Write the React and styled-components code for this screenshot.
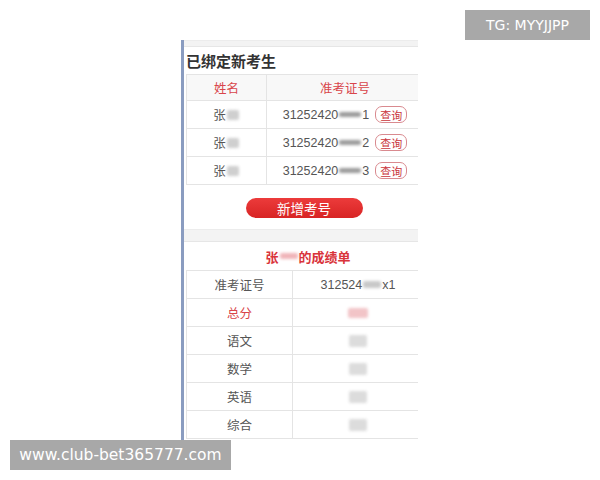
import React from 'react';
import styled, { createGlobalStyle } from 'styled-components';

const GlobalStyle = createGlobalStyle`
  html, body {
    margin: 0;
    padding: 0;
    background: #fff;
    font-family: "Liberation Sans", "Noto Sans CJK SC", sans-serif;
  }
`;

const Page = styled.div`
  position: relative;
  width: 600px;
  height: 480px;
  overflow: hidden;
  padding: 40px 0 0 181px;
  box-sizing: border-box;
`;

const Phone = styled.div`
  width: 237px;
  height: 400px;
  overflow: hidden;
  border-left: 3px solid #8a9cc0;
  box-sizing: border-box;
  background: #fff;
`;

const Inner = styled.div`
  width: 240px;
`;

const Band = styled.div`
  height: ${p => p.h}px;
  background: #f3f3f3;
  border-top: 1px solid #ececec;
  border-bottom: 1px solid #e6e6e6;
  box-sizing: border-box;
`;

const SectionTitle = styled.div`
  height: 27px;
  display: flex;
  align-items: center;
  padding-left: 2px;
  font-size: 15px;
  font-weight: bold;
  color: #333;
`;

const Table = styled.div`
  margin-left: 2px;
  border-left: 1px solid #e4e4e4;
  border-top: 1px solid #e4e4e4;
`;

const Row = styled.div`
  display: grid;
  grid-template-columns: ${p => p.cols};
  height: ${p => p.h || 28}px;
  border-bottom: 1px solid #e4e4e4;
  box-sizing: border-box;
  background: ${p => (p.head ? '#f8f8f8' : '#fff')};
`;

const Cell = styled.div`
  display: flex;
  align-items: center;
  justify-content: center;
  border-right: 1px solid #e4e4e4;
  font-size: 12.5px;
  color: ${p => (p.red ? '#d9454a' : '#555')};
  white-space: nowrap;
`;

const Blur = styled.span`
  display: inline-block;
  width: ${p => p.w}px;
  height: ${p => p.hh || 10}px;
  background: ${p => p.c || '#cfcfcf'};
  filter: blur(1.5px);
  border-radius: 2px;
  margin: 0 1px;
`;

const QueryBtn = styled.span`
  display: inline-flex;
  align-items: center;
  height: 15px;
  padding: 0 4px;
  margin-left: 6px;
  border: 1px solid #d98a8f;
  border-radius: 7px;
  font-size: 11px;
  color: #c9343b;
`;

const ButtonRow = styled.div`
  height: 44px;
  display: flex;
  justify-content: center;
  padding-top: 13px;
  box-sizing: border-box;
`;

const AddButton = styled.button`
  width: 117px;
  height: 20px;
  border: none;
  border-radius: 10px;
  background: linear-gradient(#ec3b3b, #d82424);
  color: #fff;
  font-family: inherit;
  font-size: 13.5px;
  padding: 0;
`;

const ScoreTitle = styled.div`
  height: 28px;
  display: flex;
  align-items: center;
  justify-content: center;
  padding-left: 8px;
  font-size: 13px;
  font-weight: bold;
  color: #d9343b;
`;

const Tag = styled.div`
  position: absolute;
  background: #a8a8a8;
  color: #fff;
  font-family: "DejaVu Sans", "Liberation Sans", sans-serif;
  display: flex;
  align-items: center;
  justify-content: center;
  height: 30px;
`;

const TopTag = styled(Tag)`
  top: 10px;
  left: 465px;
  width: 125px;
  font-size: 14px;
`;

const BottomTag = styled(Tag)`
  top: 440px;
  left: 10px;
  width: 221px;
  font-size: 15.5px;
`;

const students = ['1', '2', '3'];
const subjects = ['语文', '数学', '英语', '综合'];

export default function App() {
  return (
    <>
      <GlobalStyle />
      <Page>
        <Phone>
          <Inner>
            <Band h={7} />
            <SectionTitle>已绑定新考生</SectionTitle>
            <Table>
              <Row cols="80px 1fr" h={26} head>
                <Cell red>姓名</Cell>
                <Cell red>准考证号</Cell>
              </Row>
              {students.map(n => (
                <Row key={n} cols="80px 1fr">
                  <Cell>
                    张<Blur w={12} />
                  </Cell>
                  <Cell>
                    31252420<Blur w={22} hh={5} c="#9a9a9a" />{n}
                    <QueryBtn>查询</QueryBtn>
                  </Cell>
                </Row>
              ))}
            </Table>
            <ButtonRow>
              <AddButton>新增考号</AddButton>
            </ButtonRow>
            <Band h={13} />
            <ScoreTitle>
              张<Blur w={18} hh={6} c="#f0b4b8" />的成绩单
            </ScoreTitle>
            <Table>
              <Row cols="106px 1fr">
                <Cell>准考证号</Cell>
                <Cell>
                  312524<Blur w={18} hh={7} c="#c8c8c8" />x1
                </Cell>
              </Row>
              <Row cols="106px 1fr">
                <Cell red>总分</Cell>
                <Cell>
                  <Blur w={20} hh={10} c="#f2c4c7" />
                </Cell>
              </Row>
              {subjects.map(s => (
                <Row key={s} cols="106px 1fr">
                  <Cell>{s}</Cell>
                  <Cell>
                    <Blur w={18} hh={12} c="#dcdcdc" />
                  </Cell>
                </Row>
              ))}
            </Table>
          </Inner>
        </Phone>
        <TopTag>TG: MYYJJPP</TopTag>
        <BottomTag>www.club-bet365777.com</BottomTag>
      </Page>
    </>
  );
}
